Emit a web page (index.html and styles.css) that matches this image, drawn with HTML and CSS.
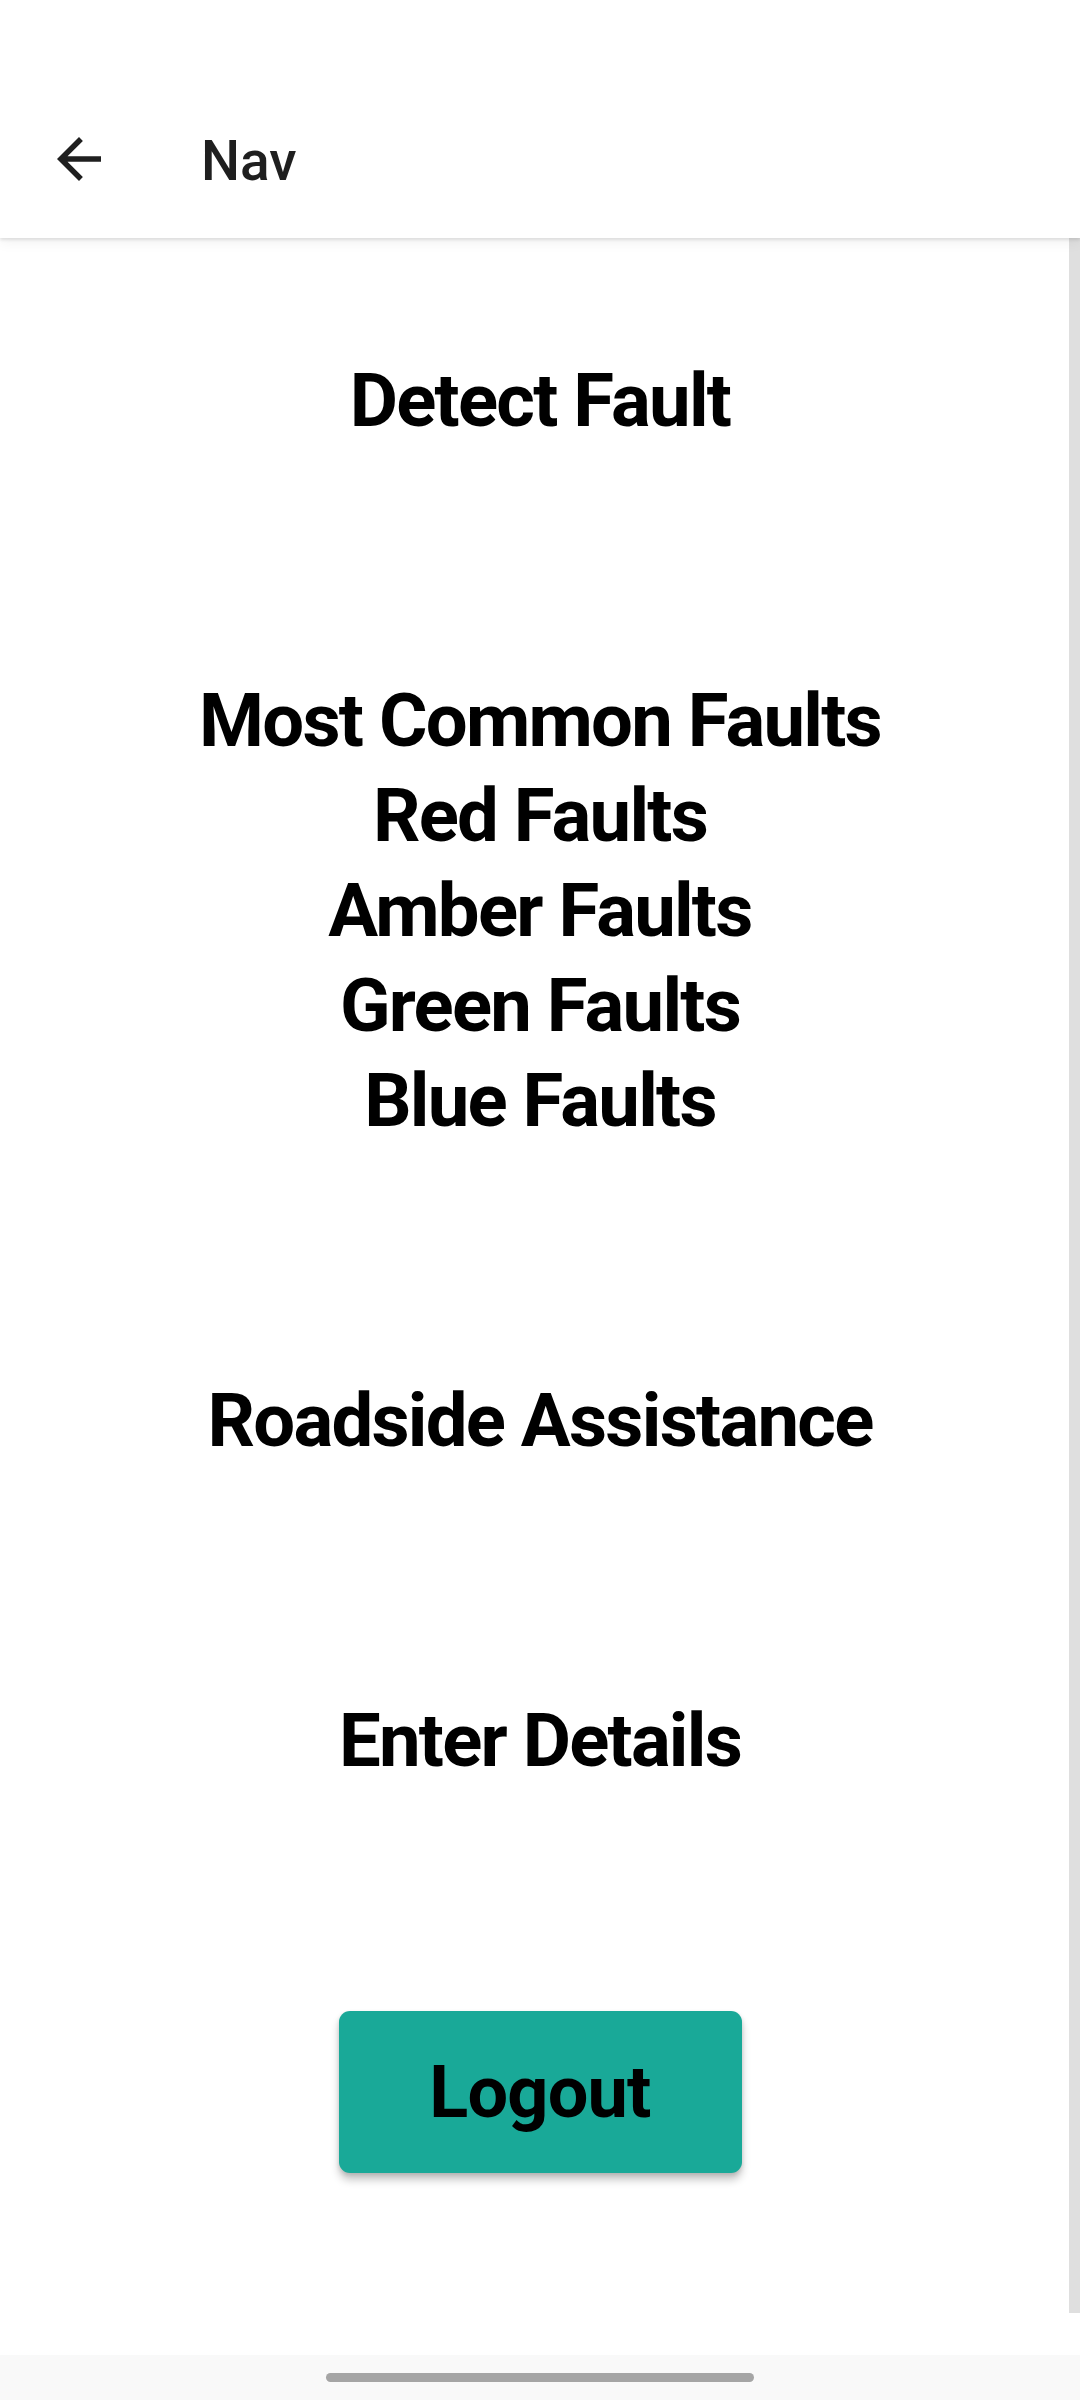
FILE: index.html
```html
<!DOCTYPE html>
<html lang="en">
<head>
<meta charset="utf-8">
<title>Nav</title>
<link rel="stylesheet" href="styles.css">
</head>
<body>
<div class="screen">
  <header class="appbar">
    <div class="toolbar">
      <svg class="back" viewBox="0 0 24 24" width="66" height="66" aria-hidden="true">
        <path d="M20 11H7.83l5.59-5.59L12 4l-8 8 8 8 1.41-1.41L7.83 13H20v-2z" fill="#1f1f1f"/>
      </svg>
      <span class="title">Nav</span>
    </div>
  </header>
  <main class="content">
    <div class="menu">
      <div class="item">Detect Fault</div>
      <div class="item group">
        <div>Most Common Faults</div>
        <div>Red Faults</div>
        <div>Amber Faults</div>
        <div>Green Faults</div>
        <div>Blue Faults</div>
      </div>
      <div class="item">Roadside Assistance</div>
      <div class="item">Enter Details</div>
      <button class="logout">Logout</button>
    </div>
    <div class="scrollbar"></div>
  </main>
  <div class="spacer"></div>
  <footer class="navbar">
    <div class="handle"></div>
  </footer>
</div>
</body>
</html>
```

FILE: styles.css
```css
html, body {
  margin: 0;
  padding: 0;
  background: #ffffff;
}

body {
  font-family: Roboto, "Liberation Sans", Arial, sans-serif;
}

.screen {
  width: 1080px;
  height: 2400px;
  display: flex;
  flex-direction: column;
  overflow: hidden;
}

.appbar {
  position: relative;
  z-index: 2;
  background: #ffffff;
  padding-top: 84px;
  height: 154px;
  box-shadow: 0 2px 3px rgba(0, 0, 0, 0.10), 0 5px 12px rgba(0, 0, 0, 0.05);
}

.toolbar {
  height: 154px;
  display: flex;
  align-items: center;
}

.back {
  display: block;
  margin-left: 46px;
  margin-top: -4px;
  flex: none;
}

.title {
  margin-left: 89px;
  font-size: 55px;
  font-weight: 500;
  color: #1f1f1f;
  line-height: 64px;
}

.content {
  position: relative;
  height: 2075px;
  background: #ffffff;
}

.menu {
  display: flex;
  flex-direction: column;
  align-items: center;
  gap: 225px;
  padding-top: 115px;
}

.item {
  font-size: 74.25px;
  font-weight: 700;
  color: #000000;
  line-height: 95px;
  letter-spacing: -1.75px;
  text-align: center;
}

.group {
  display: flex;
  flex-direction: column;
  align-items: center;
}

.logout {
  margin-top: -2px;
  width: 403px;
  height: 162px;
  border: none;
  border-radius: 11px;
  background: #19a998;
  color: #000000;
  font-family: Roboto, "Liberation Sans", Arial, sans-serif;
  font-size: 72px;
  font-weight: 700;
  letter-spacing: -0.8px;
  padding: 0;
  box-shadow: 0 7px 9px rgba(0, 0, 0, 0.22), 0 2px 4px rgba(0, 0, 0, 0.12);
}

.scrollbar {
  position: absolute;
  top: 0;
  right: 0;
  width: 11px;
  height: 100%;
  background: #dfdfdf;
}

.spacer {
  height: 42px;
  background: #ffffff;
}

.navbar {
  flex: 1;
  background: #f9f9f9;
  display: flex;
  justify-content: center;
  padding-top: 18px;
}

.handle {
  width: 428px;
  height: 9px;
  border-radius: 5px;
  background: #a5a5a5;
}
```
